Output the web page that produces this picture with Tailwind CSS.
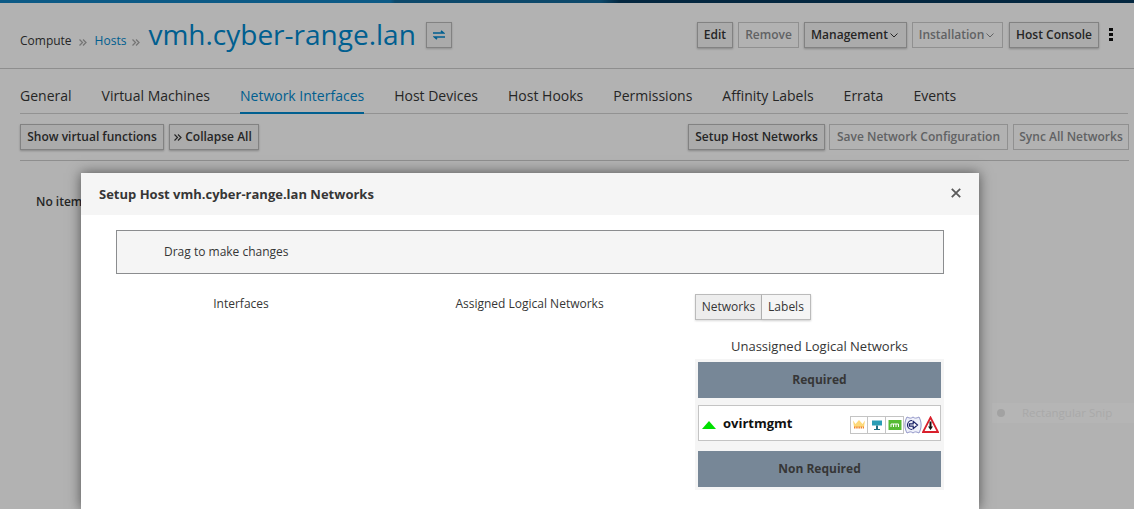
<!DOCTYPE html>
<html lang="en">
<head>
    <meta charset="UTF-8">
    <title>Setup Host Networks</title>
    <script src="https://cdn.jsdelivr.net/npm/@tailwindcss/browser@4"></script>
</head>
<body class="bg-white overflow-hidden font-['Open_Sans',sans-serif] text-[#363636]">
<div class="relative w-[1134px] h-[509px] overflow-hidden">
    <!-- Page under the backdrop -->
    <div class="h-[3px] bg-[linear-gradient(90deg,#1281c1_0,#1281c1_390px,#14699a_395px,#14699a_600px,#06395c_620px,#06395c_100%)]"></div>

    <div class="h-[66px] border-b border-[#cccccc] flex items-start pl-5 pr-[21px] pt-[19px]">
        <span class="text-[12px] leading-[38px]">Compute</span>
        <svg class="mx-[7px] mt-[17px]" width="8" height="7" viewBox="0 0 8 7" fill="none" stroke="#a8a8a8" stroke-width="1.300"><path d="M0.500 0.500 3.500 3.500 0.500 6.500M4 0.500 7 3.500 4 6.500"/></svg>
        <span class="ml-[1px] text-[12px] leading-[38px] text-[#0088ce]">Hosts</span>
        <svg class="ml-[6px] mr-[8px] mt-[17px]" width="8" height="7" viewBox="0 0 8 7" fill="none" stroke="#a8a8a8" stroke-width="1.300"><path d="M0.500 0.500 3.500 3.500 0.500 6.500M4 0.500 7 3.500 4 6.500"/></svg>
        <span class="text-[28px] leading-[28px] text-[#0088ce] mt-[-2px]">vmh.cyber-range.lan</span>
        <button class="ml-[10px] w-[26px] h-[26px] border border-[#bbbbbb] bg-[#f5f5f5] shadow-[0_1px_2px_rgba(0,0,0,0.2)] flex items-center justify-center">
            <svg width="12" height="10" viewBox="0 0 12 10" fill="none" stroke="#0088ce" stroke-width="1.600"><path d="M0 3h10M8 0.800 10.500 3 8 3M12 7H2M4 9.200 1.500 7 4 7"/></svg>
        </button>
        <div class="ml-auto flex items-center gap-[5px] text-[12px] font-semibold">
            <button class="h-[26px] w-[36px] border border-[#bbbbbb] bg-[#f5f5f5] shadow-[0_1px_2px_rgba(0,0,0,0.25)]">Edit</button>
            <button class="h-[26px] w-[61px] border border-[#cfcfcf] text-[#8b8d8f]">Remove</button>
            <button class="h-[26px] w-[103px] pr-[2px] border border-[#bbbbbb] bg-[#f5f5f5] shadow-[0_1px_2px_rgba(0,0,0,0.25)] flex items-center justify-center gap-[2px]">Management
                <svg width="8" height="5" viewBox="0 0 8 5" fill="none" stroke="#363636"><path d="M0.500 0.500 4 4l3.500-3.500"/></svg>
            </button>
            <button class="h-[26px] w-[91px] pr-[2px] border border-[#cfcfcf] text-[#8b8d8f] flex items-center justify-center gap-[2px]">Installation
                <svg width="8" height="5" viewBox="0 0 8 5" fill="none" stroke="#8b8d8f"><path d="M0.500 0.500 4 4l3.500-3.500"/></svg>
            </button>
            <button class="ml-[1px] h-[26px] w-[90px] border border-[#bbbbbb] bg-[#f5f5f5] shadow-[0_1px_2px_rgba(0,0,0,0.25)]">Host Console</button>
            <div class="ml-[5px] w-[4px] flex flex-col gap-[2px] items-center mb-[2px]">
                <span class="w-[4px] h-[3px] bg-[#111111]"></span>
                <span class="w-[4px] h-[3px] bg-[#111111]"></span>
                <span class="w-[4px] h-[3px] bg-[#111111]"></span>
            </div>
        </div>
    </div>

    <div class="ml-5 mr-[6px] h-[45px] border-b border-[#d1d1d1] flex items-end gap-[30px] text-[14px]">
        <span class="h-[44px] leading-[54px]">General</span>
        <span class="h-[44px] leading-[54px]">Virtual Machines</span>
        <span class="h-[45px] leading-[53px] text-[#0088ce] border-b-2 border-[#0088ce] mb-[-1px]">Network Interfaces</span>
        <span class="h-[44px] leading-[54px]">Host Devices</span>
        <span class="h-[44px] leading-[54px]">Host Hooks</span>
        <span class="h-[44px] leading-[54px]">Permissions</span>
        <span class="h-[44px] leading-[54px]">Affinity Labels</span>
        <span class="h-[44px] leading-[54px]">Errata</span>
        <span class="h-[44px] leading-[54px]">Events</span>
    </div>

    <div class="ml-5 mr-[5px] h-[47px] border-b border-[#cccccc] pt-[10px] flex items-start gap-[5px] text-[12px] font-semibold">
        <button class="h-[26px] w-[144px] border border-[#bbbbbb] bg-[#f5f5f5] shadow-[0_1px_2px_rgba(0,0,0,0.25)]">Show virtual functions</button>
        <button class="h-[26px] w-[90px] pr-[2px] border border-[#bbbbbb] bg-[#f5f5f5] shadow-[0_1px_2px_rgba(0,0,0,0.25)] flex items-center justify-center gap-[3px]">
            <svg width="8" height="7" viewBox="0 0 8 7" fill="none" stroke="#363636" stroke-width="1.200"><path d="M0.500 0.500 3.500 3.500 0.500 6.500M4 0.500 7 3.500 4 6.500"/></svg>
            Collapse All
        </button>
        <button class="ml-auto h-[26px] w-[137px] border border-[#bbbbbb] bg-[#f5f5f5] shadow-[0_1px_2px_rgba(0,0,0,0.25)]">Setup Host Networks</button>
        <button class="ml-[-1px] h-[26px] w-[179px] border border-[#cfcfcf] text-[#8b8d8f]">Save Network Configuration</button>
        <button class="h-[26px] w-[116px] border border-[#cfcfcf] text-[#8b8d8f]">Sync All Networks</button>
    </div>

    <div class="pl-9 pt-[32px] text-[12px] font-semibold leading-[17px]">No items to display</div>

    <!-- Backdrop -->
    <div class="absolute inset-0 bg-black/30"></div>

    <!-- Faded snip tool label -->
    <div class="absolute left-[992px] top-[403px] w-[142px] h-[20px] flex items-center bg-white/[0.04] text-[11.5px] text-[#a9a9a9]">
        <span class="ml-[5px] w-[8px] h-[8px] rounded-full bg-[#a2a2a2]"></span>
        <span class="ml-[17px]">Rectangular Snip</span>
    </div>

    <!-- Modal -->
    <div class="absolute left-[81px] top-[173px] w-[898px] h-[336px] bg-white shadow-[0_0_12px_rgba(0,0,0,0.55)]">
        <div class="h-[42px] bg-[#f5f5f5] flex items-center pl-[18px] pr-[18px] justify-between">
            <span class="text-[13px] font-bold leading-[42px]">Setup Host vmh.cyber-range.lan Networks</span>
            <svg class="mb-[2px]" width="10" height="10" viewBox="0 0 10 10" stroke="#5a5a5a" stroke-width="1.800"><path d="M0.800 0.800 9.200 9.200M9.200 0.800 0.800 9.200"/></svg>
        </div>
        <div class="mt-[15px] ml-[35px] w-[828px] h-[44px] bg-[#f5f5f5] border border-[#8b8d8f] pl-[47px] flex items-center text-[12px]">Drag to make changes</div>

        <div class="ml-[35px] w-[828px] flex items-start">
            <div class="w-[250px] pt-[20px] text-center text-[12px] leading-[20px]">Interfaces</div>
            <div class="w-[327px] pt-[20px] text-center text-[12px] leading-[20px]">Assigned Logical Networks</div>
            <div class="ml-[2px] w-[249px]">
                <div class="pt-[20px] flex text-[12px]">
                    <button class="h-[26px] w-[67px] border border-[#bbbbbb] bg-[#ededed] shadow-[0_1px_2px_rgba(0,0,0,0.15)]">Networks</button>
                    <button class="h-[26px] w-[49px] border border-l-0 border-[#bbbbbb] bg-[#f5f5f5] shadow-[0_1px_2px_rgba(0,0,0,0.2)]">Labels</button>
                </div>
                <div class="mt-[16px] text-center text-[13px] leading-[20px]">Unassigned Logical Networks</div>
                <div class="mt-[3px] h-[131px] bg-[#f5f5f5] p-[3px] flex flex-col">
                    <div class="h-[36px] bg-[#778797] flex items-center justify-center text-[12px] font-bold">Required</div>
                    <div class="mt-[7px] h-[36px] bg-white border border-[#c4c4c4] flex items-center pl-[3px] pr-[1px]">
                        <span class="mt-[3px] w-0 h-0 border-x-[7px] border-x-transparent border-b-[8px] border-b-[#00e000]"></span>
                        <span class="ml-[7px] text-[13px] font-bold text-[#111111] mb-[-1px]">ovirtmgmt</span>
                        <div class="ml-auto mt-[3px] flex items-center h-[18px]">
                            <span class="w-[18px] h-[18px] border border-[#c4c4c4] flex items-center justify-center">
                                <svg width="14" height="11" viewBox="0 0 14 11"><path d="M1 1.500 3.500 5 7 1 10.500 5 13 1.500 12 8H2Z" fill="#fdd97a"/><path d="M2 8.500h10" stroke="#f0862a" stroke-width="2" stroke-dasharray="1.500 0.700"/></svg>
                            </span>
                            <span class="w-[18px] h-[18px] border border-l-0 border-[#c4c4c4] flex items-center justify-center">
                                <svg width="12" height="12" viewBox="0 0 12 12"><rect x="1" y="1.500" width="10" height="5" fill="#2a9db5"/><path d="M5 6.500h2V10H5ZM3 10h6v1H3Z" fill="#1f6f82"/></svg>
                            </span>
                            <span class="w-[18px] h-[18px] border border-l-0 border-[#c4c4c4] flex items-center justify-center">
                                <svg width="14" height="12" viewBox="0 0 14 12"><rect x="0.500" y="1" width="13" height="10" fill="#56bb33"/><path d="M3 5v3M5.500 5v3M8 5v3M10.500 5v3M3 5h7.500" stroke="#fff" stroke-width="1" fill="none"/></svg>
                            </span>
                            <span class="w-[18px] h-[18px] flex items-center justify-center">
                                <svg width="18" height="18" viewBox="0 0 18 18"><path d="M3 1C6 2.500 7 2.500 9 1 11 2.500 12 2.500 15 1 17.800 6 17.800 12 15 17 12 15.500 11 15.500 9 17 7 15.500 6 15.500 3 17 0.200 12 0.200 6 3 1Z" fill="#eef0fa" stroke="#9296c8"/><path d="M8 4.500A4.500 4.500 0 0 0 8 13.500" fill="none" stroke="#1b2368" stroke-width="1.200"/><path d="M5.500 7.800h3.700V5.400L13.500 9 9.200 12.600v-2.400H5.500Z" fill="#fff" stroke="#1b2368" stroke-width="1.200"/></svg>
                            </span>
                            <span class="w-[17px] h-[18px] flex items-center justify-center">
                                <svg width="17" height="17" viewBox="0 0 17 17"><path d="M8.500 1.500 16 16H1Z" fill="#fff" stroke="#d9202c" stroke-width="1.800"/><path d="M7.500 5.500h2v5h1.500L8.500 14 6 10.500h1.500Z" fill="#111"/></svg>
                            </span>
                        </div>
                    </div>
                    <div class="mt-[10px] h-[36px] bg-[#778797] flex items-center justify-center text-[12px] font-bold">Non Required</div>
                </div>
            </div>
        </div>
    </div>
</div>
</body>
</html>
